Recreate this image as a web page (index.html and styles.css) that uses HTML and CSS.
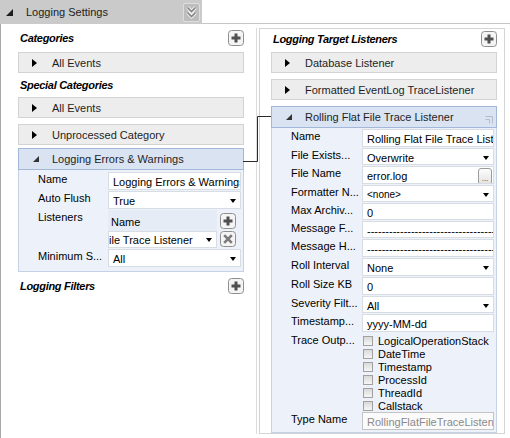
FILE: index.html
```html
<!DOCTYPE html>
<html lang="en">
  <head>
    <meta charset="UTF-8" />
    <title>Logging Settings</title>
    <link rel="stylesheet" href="styles.css">
  </head>
  <body>
    <div class="designer">
      <div class="tabbar">
        <div class="tab">
          <span class="tri-open tri-big"></span>
          <span class="tab-title">Logging Settings</span>
          <span class="collapse-btn">
            <svg width="11" height="13" viewBox="0 0 11 13">
              <path d="M1.5 1.5l4 4 4-4M1.5 6.5l4 4 4-4" fill="none" stroke="#f2f2f2" stroke-width="3.4" />
              <path d="M1.5 1.5l4 4 4-4M1.5 6.5l4 4 4-4" fill="none" stroke="#838383" stroke-width="1.6" />
            </svg>
          </span>
        </div>
        <div class="tab-rest"></div>
      </div>

      <div class="surface">
        <!-- left: categories -->
        <div class="column column-left">
          <div class="section-head">
            <span class="section-title">Categories</span>
            <span class="icon-btn">
              <svg width="16" height="16" viewBox="0 0 16 16"><rect x="0.5" y="0.5" width="15" height="15" rx="3" fill="#f4f4f4" stroke="#8f8f8f" /><path d="M8 3.5v9M3.5 8h9" stroke="#4f4f4f" stroke-width="3" /></svg>
            </span>
          </div>
          <div class="bar"><span class="tri-closed"></span>All Events</div>

          <div class="section-head section-gap">
            <span class="section-title">Special Categories</span>
          </div>
          <div class="bar bar-tight"><span class="tri-closed"></span>All Events</div>
          <div class="bar"><span class="tri-closed"></span>Unprocessed Category</div>

          <div class="group">
            <div class="group-head"><span class="tri-open"></span>Logging Errors &amp; Warnings</div>
            <div class="props props-left">
              <div class="prop">
                <span class="prop-label">Name</span>
                <span class="value">Logging Errors &amp; Warnings</span>
              </div>
              <div class="prop">
                <span class="prop-label">Auto Flush</span>
                <span class="value">True<i class="caret"></i></span>
              </div>
              <div class="prop prop-auto">
                <span class="prop-label">Listeners</span>
                <div class="list">
                  <div class="list-head">
                    <span class="list-col">Name</span>
                    <span class="icon-btn">
                      <svg width="16" height="16" viewBox="0 0 16 16"><rect x="0.5" y="0.5" width="15" height="15" rx="3" fill="#f4f4f4" stroke="#8f8f8f" /><path d="M8 3.5v9M3.5 8h9" stroke="#4f4f4f" stroke-width="3" /></svg>
                    </span>
                  </div>
                  <div class="list-row">
                    <span class="value list-cell">ile Trace Listener<i class="caret"></i></span>
                    <span class="icon-btn">
                      <svg width="16" height="16" viewBox="0 0 16 16"><rect x="0.5" y="0.5" width="15" height="15" rx="3" fill="#f4f4f4" stroke="#8f8f8f" /><path d="M4.2 4.2l7.6 7.6M11.8 4.2l-7.6 7.6" stroke="#7a7a7a" stroke-width="2.6" /></svg>
                    </span>
                  </div>
                </div>
              </div>
              <div class="prop">
                <span class="prop-label">Minimum S...</span>
                <span class="value">All<i class="caret"></i></span>
              </div>
            </div>
          </div>

          <div class="section-head section-after-group">
            <span class="section-title">Logging Filters</span>
            <span class="icon-btn">
              <svg width="16" height="16" viewBox="0 0 16 16"><rect x="0.5" y="0.5" width="15" height="15" rx="3" fill="#f4f4f4" stroke="#8f8f8f" /><path d="M8 3.5v9M3.5 8h9" stroke="#4f4f4f" stroke-width="3" /></svg>
            </span>
          </div>
        </div>

        <!-- right: listeners -->
        <div class="column column-right">
          <div class="section-head section-top">
            <span class="section-title">Logging Target Listeners</span>
            <span class="icon-btn">
              <svg width="16" height="16" viewBox="0 0 16 16"><rect x="0.5" y="0.5" width="15" height="15" rx="3" fill="#f4f4f4" stroke="#8f8f8f" /><path d="M8 3.5v9M3.5 8h9" stroke="#4f4f4f" stroke-width="3" /></svg>
            </span>
          </div>
          <div class="bar bar-first"><span class="tri-closed"></span>Database Listener</div>
          <div class="bar"><span class="tri-closed"></span>Formatted EventLog TraceListener</div>

          <div class="group group-right">
            <div class="group-head">
              <span class="tri-open"></span>Rolling Flat File Trace Listener
              <svg class="corner" width="8" height="8" viewBox="0 0 8 8"><path d="M0.5 0.5h7v7M0.5 3.5h4v4" fill="none" stroke="#b3bccb" /></svg>
            </div>
            <div class="props props-right">
              <div class="prop prop-tall">
                <span class="prop-label">Name</span>
                <span class="value">Rolling Flat File Trace Listener</span>
              </div>
              <div class="prop">
                <span class="prop-label">File Exists...</span>
                <span class="value">Overwrite<i class="caret"></i></span>
              </div>
              <div class="prop prop-tall">
                <span class="prop-label">File Name</span>
                <span class="value">error.log<span class="dots-btn">...</span></span>
              </div>
              <div class="prop">
                <span class="prop-label">Formatter N...</span>
                <span class="value value-small">&lt;none&gt;<i class="caret"></i></span>
              </div>
              <div class="prop">
                <span class="prop-label">Max Archiv...</span>
                <span class="value">0</span>
              </div>
              <div class="prop">
                <span class="prop-label">Message F...</span>
                <span class="value">----------------------------------------------------</span>
              </div>
              <div class="prop prop-tall">
                <span class="prop-label">Message H...</span>
                <span class="value">----------------------------------------------------</span>
              </div>
              <div class="prop prop-tall">
                <span class="prop-label">Roll Interval</span>
                <span class="value">None<i class="caret"></i></span>
              </div>
              <div class="prop prop-tall">
                <span class="prop-label">Roll Size KB</span>
                <span class="value">0</span>
              </div>
              <div class="prop">
                <span class="prop-label">Severity Filt...</span>
                <span class="value">All<i class="caret"></i></span>
              </div>
              <div class="prop prop-tall">
                <span class="prop-label">Timestamp...</span>
                <span class="value">yyyy-MM-dd</span>
              </div>
              <div class="prop prop-auto">
                <span class="prop-label">Trace Outp...</span>
                <div class="checks">
                  <label class="check"><span class="box"></span>LogicalOperationStack</label>
                  <label class="check"><span class="box"></span>DateTime</label>
                  <label class="check"><span class="box"></span>Timestamp</label>
                  <label class="check"><span class="box"></span>ProcessId</label>
                  <label class="check"><span class="box"></span>ThreadId</label>
                  <label class="check"><span class="box"></span>Callstack</label>
                </div>
              </div>
              <div class="prop prop-tall">
                <span class="prop-label">Type Name</span>
                <span class="value value-disabled">RollingFlatFileTraceListener</span>
              </div>
            </div>
          </div>
        </div>
      </div>

      <!-- link between the category and its listener -->
      <svg class="link" width="510" height="438">
        <polyline points="243,161.5 257.5,161.5 257.5,116.5 271,116.5" fill="none" stroke="#2b2b2b" />
      </svg>
    </div>
  </body>
</html>
```

FILE: styles.css
```css
* {
  box-sizing: border-box;
  margin: 0;
  padding: 0;
}
body {
  font-family: "Liberation Sans", Arial, sans-serif;
  font-size: 11px;
  color: #000;
  background: #fff;
  width: 510px;
  height: 438px;
  overflow: hidden;
}
.designer {
  position: relative;
  height: 438px;
}

/* Tab */
.tabbar {
  display: flex;
  height: 24px;
}
.tab {
  width: 202px;
  background: #cacaca;
  display: flex;
  align-items: center;
  padding-left: 6px;
}
.tab-title {
  margin-left: 13px;
  color: #1c1c1c;
}
.collapse-btn {
  margin-left: auto;
  margin-right: 2px;
  width: 17px;
  height: 19px;
  border: 1px solid #dedede;
  border-radius: 2px;
  background: #bdbdbd;
  display: flex;
  align-items: center;
  justify-content: center;
}
.tab-rest {
  flex: 1;
  border-bottom: 1px solid #c6c6c6;
}

/* Surface and columns */
.surface {
  display: flex;
  gap: 2px;
  height: 414px;
  padding: 4px 0;
  border-left: 1px solid #a8a8a8;
}
.column-left {
  width: 256px;
  padding: 1px 12px 0 17px;
  border-right: 1px solid #dcdcdc;
}
.column-right {
  width: 246px;
  padding: 0 7px 0 11px;
  border: 1px solid #d4d4d4;
}

/* Section headings */
.section-head {
  display: flex;
  align-items: center;
  justify-content: space-between;
  height: 17px;
}
.section-title {
  font-weight: bold;
  font-style: italic;
  letter-spacing: -0.3px;
  padding-left: 2px;
}
.section-gap {
  margin-top: 3px;
}
.section-after-group {
  margin-top: 5px;
}
.section-top {
  margin-top: 1px;
}
.icon-btn {
  display: flex;
  width: 16px;
  height: 16px;
  flex-shrink: 0;
}

/* Collapsed bars */
.bar {
  display: flex;
  align-items: center;
  height: 21px;
  margin-top: 6px;
  background: #ededed;
  border: 1px solid #d3d3d3;
  color: #1e1e1e;
}
.bar-tight {
  margin-top: 4px;
}
.bar-first {
  margin-top: 5px;
}
.tri-closed {
  width: 0;
  height: 0;
  border-left: 5px solid #000;
  border-top: 4px solid transparent;
  border-bottom: 4px solid transparent;
  margin: 0 15px 0 13px;
}
.tri-open {
  width: 0;
  height: 0;
  border-left: 6px solid transparent;
  border-bottom: 6px solid #333;
  margin: 0 13px 0 14px;
}
.tri-big {
  border-left-width: 7px;
  border-bottom-width: 7px;
  border-bottom-color: #1e1e1e;
  margin: 0;
}

/* Expanded group */
.group {
  margin-top: 3px;
}
.group-right {
  margin-top: 6px;
}
.group-head {
  display: flex;
  align-items: center;
  height: 22px;
  background: #d9e3f2;
  border: 1px solid #a3b7d8;
  color: #1e1e1e;
}
.corner {
  margin-left: auto;
  margin-right: 3px;
  margin-top: 6px;
}
.props {
  background: #edf2fa;
  border: 1px solid #c4d1e6;
  border-top: none;
}
.props-left {
  padding: 2px 2px 3px 19px;
}
.props-right {
  padding: 1px 2px 1px 19px;
}
.prop {
  display: flex;
  align-items: flex-start;
  height: 18px;
}
.prop-tall {
  height: 19px;
}
.props-left .prop {
  height: 19px;
}
.props .prop-auto {
  height: auto;
}
.prop-label {
  width: 71px;
  flex-shrink: 0;
  padding-top: 1px;
  white-space: nowrap;
}
.props-left .prop-label {
  width: 70px;
}
.value {
  flex: 1;
  min-width: 0;
  height: calc(100% - 1px);
  display: flex;
  align-items: center;
  padding: 2px 4px 0;
  background: #fff;
  border: 1px solid #d8dce3;
  white-space: nowrap;
  overflow: hidden;
}
.value-small {
  font-size: 10px;
}
.value-disabled {
  color: #8a8a8a;
  border-color: #c4c4c4;
  background: #fbfbfb;
}
.caret {
  margin-left: auto;
  flex-shrink: 0;
  width: 0;
  height: 0;
  border-top: 4px solid #000;
  border-left: 3px solid transparent;
  border-right: 3px solid transparent;
}
.dots-btn {
  margin-left: auto;
  margin-right: -3px;
  flex-shrink: 0;
  width: 14px;
  height: 17px;
  border: 1px solid #9b9b9b;
  border-radius: 3px;
  background: linear-gradient(#fdfdfd, #e2e2e2);
  font-size: 8px;
  line-height: 20px;
  text-align: center;
  color: #333;
}

/* Listener list */
.list {
  width: 132px;
}
.list-head {
  display: flex;
  align-items: center;
  height: 21px;
}
.list-col {
  width: 109px;
  height: 100%;
  display: flex;
  align-items: center;
  padding: 2px 3px 0;
  background: #e6ecf5;
  margin-right: 3px;
}
.list-row {
  display: flex;
  height: 18px;
}
.list-cell {
  flex: none;
  width: 109px;
  height: 17px;
  padding: 1px 4px 0 0;
  margin-right: 3px;
}

/* Check list */
.checks {
  display: flex;
  flex-direction: column;
  padding-top: 1px;
}
.check {
  display: flex;
  align-items: center;
  height: 13px;
  gap: 5px;
  margin-left: 1px;
}
.box {
  width: 10px;
  height: 10px;
  border: 1px solid #a1a1a1;
  background: linear-gradient(#d9d9d9, #f6f6f6);
}

/* Connector overlay */
.link {
  position: absolute;
  top: 0;
  left: 0;
  pointer-events: none;
}
```
